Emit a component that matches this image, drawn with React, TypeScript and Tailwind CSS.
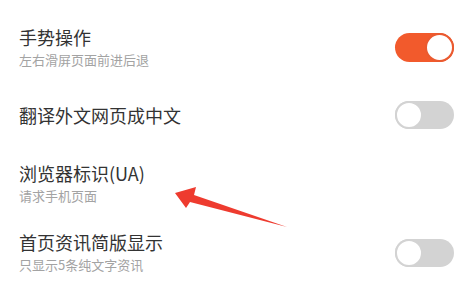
import React from 'react';

interface Item {
    title: string;
    subtitle?: string;
    toggle?: 'on' | 'off';
    mt: string;
}

const items: Item[] = [
    { title: '手势操作', subtitle: '左右滑屏页面前进后退', toggle: 'on', mt: 'mt-0' },
    { title: '翻译外文网页成中文', toggle: 'off', mt: 'mt-[31px]' },
    { title: '浏览器标识(UA)', subtitle: '请求手机页面', mt: 'mt-[32px]' },
    { title: '首页资讯简版显示', subtitle: '只显示5条纯文字资讯', toggle: 'off', mt: 'mt-[24px]' },
];

function Toggle({ on }: { on: boolean }) {
    return on ? (
        <div className="w-[59px] h-[29px] rounded-full bg-[#f25a2c] flex justify-end">
            <div className="w-[29px] h-[29px] rounded-full bg-white border-2 border-[#ea5a30]" />
        </div>
    ) : (
        <div className="w-[59px] h-[28px] rounded-full bg-[#d3d3d3] flex justify-start">
            <div className="w-[28px] h-[28px] rounded-full bg-white border-2 border-[#d3d3d3]" />
        </div>
    );
}

export default function App() {
    return (
        <div
            className="relative w-[472px] h-[287px] bg-white overflow-hidden pt-[25px] pl-[19px] pr-[18px]"
            style={{ fontFamily: '"Noto Sans CJK SC", "Noto Sans", sans-serif' }}
        >
            {items.map((item, i) => (
                <div key={i} className={`flex items-center justify-between ${item.mt}`}>
                    <div className="flex flex-col">
                        <span className="text-[18px] leading-[24px] text-[#333333]">{item.title}</span>
                        {item.subtitle && (
                            <span className="text-[13px] leading-[21px] text-[#a3a3a3]">{item.subtitle}</span>
                        )}
                    </div>
                    {item.toggle && <Toggle on={item.toggle === 'on'} />}
                </div>
            ))}

            {/* red annotation arrow */}
            <svg className="absolute left-0 top-0" width="472" height="287" viewBox="0 0 472 287">
                <polygon points="175,193 196,187 194,195 287,227 190,202 186,208" fill="#ee3b2f" />
            </svg>
        </div>
    );
}
